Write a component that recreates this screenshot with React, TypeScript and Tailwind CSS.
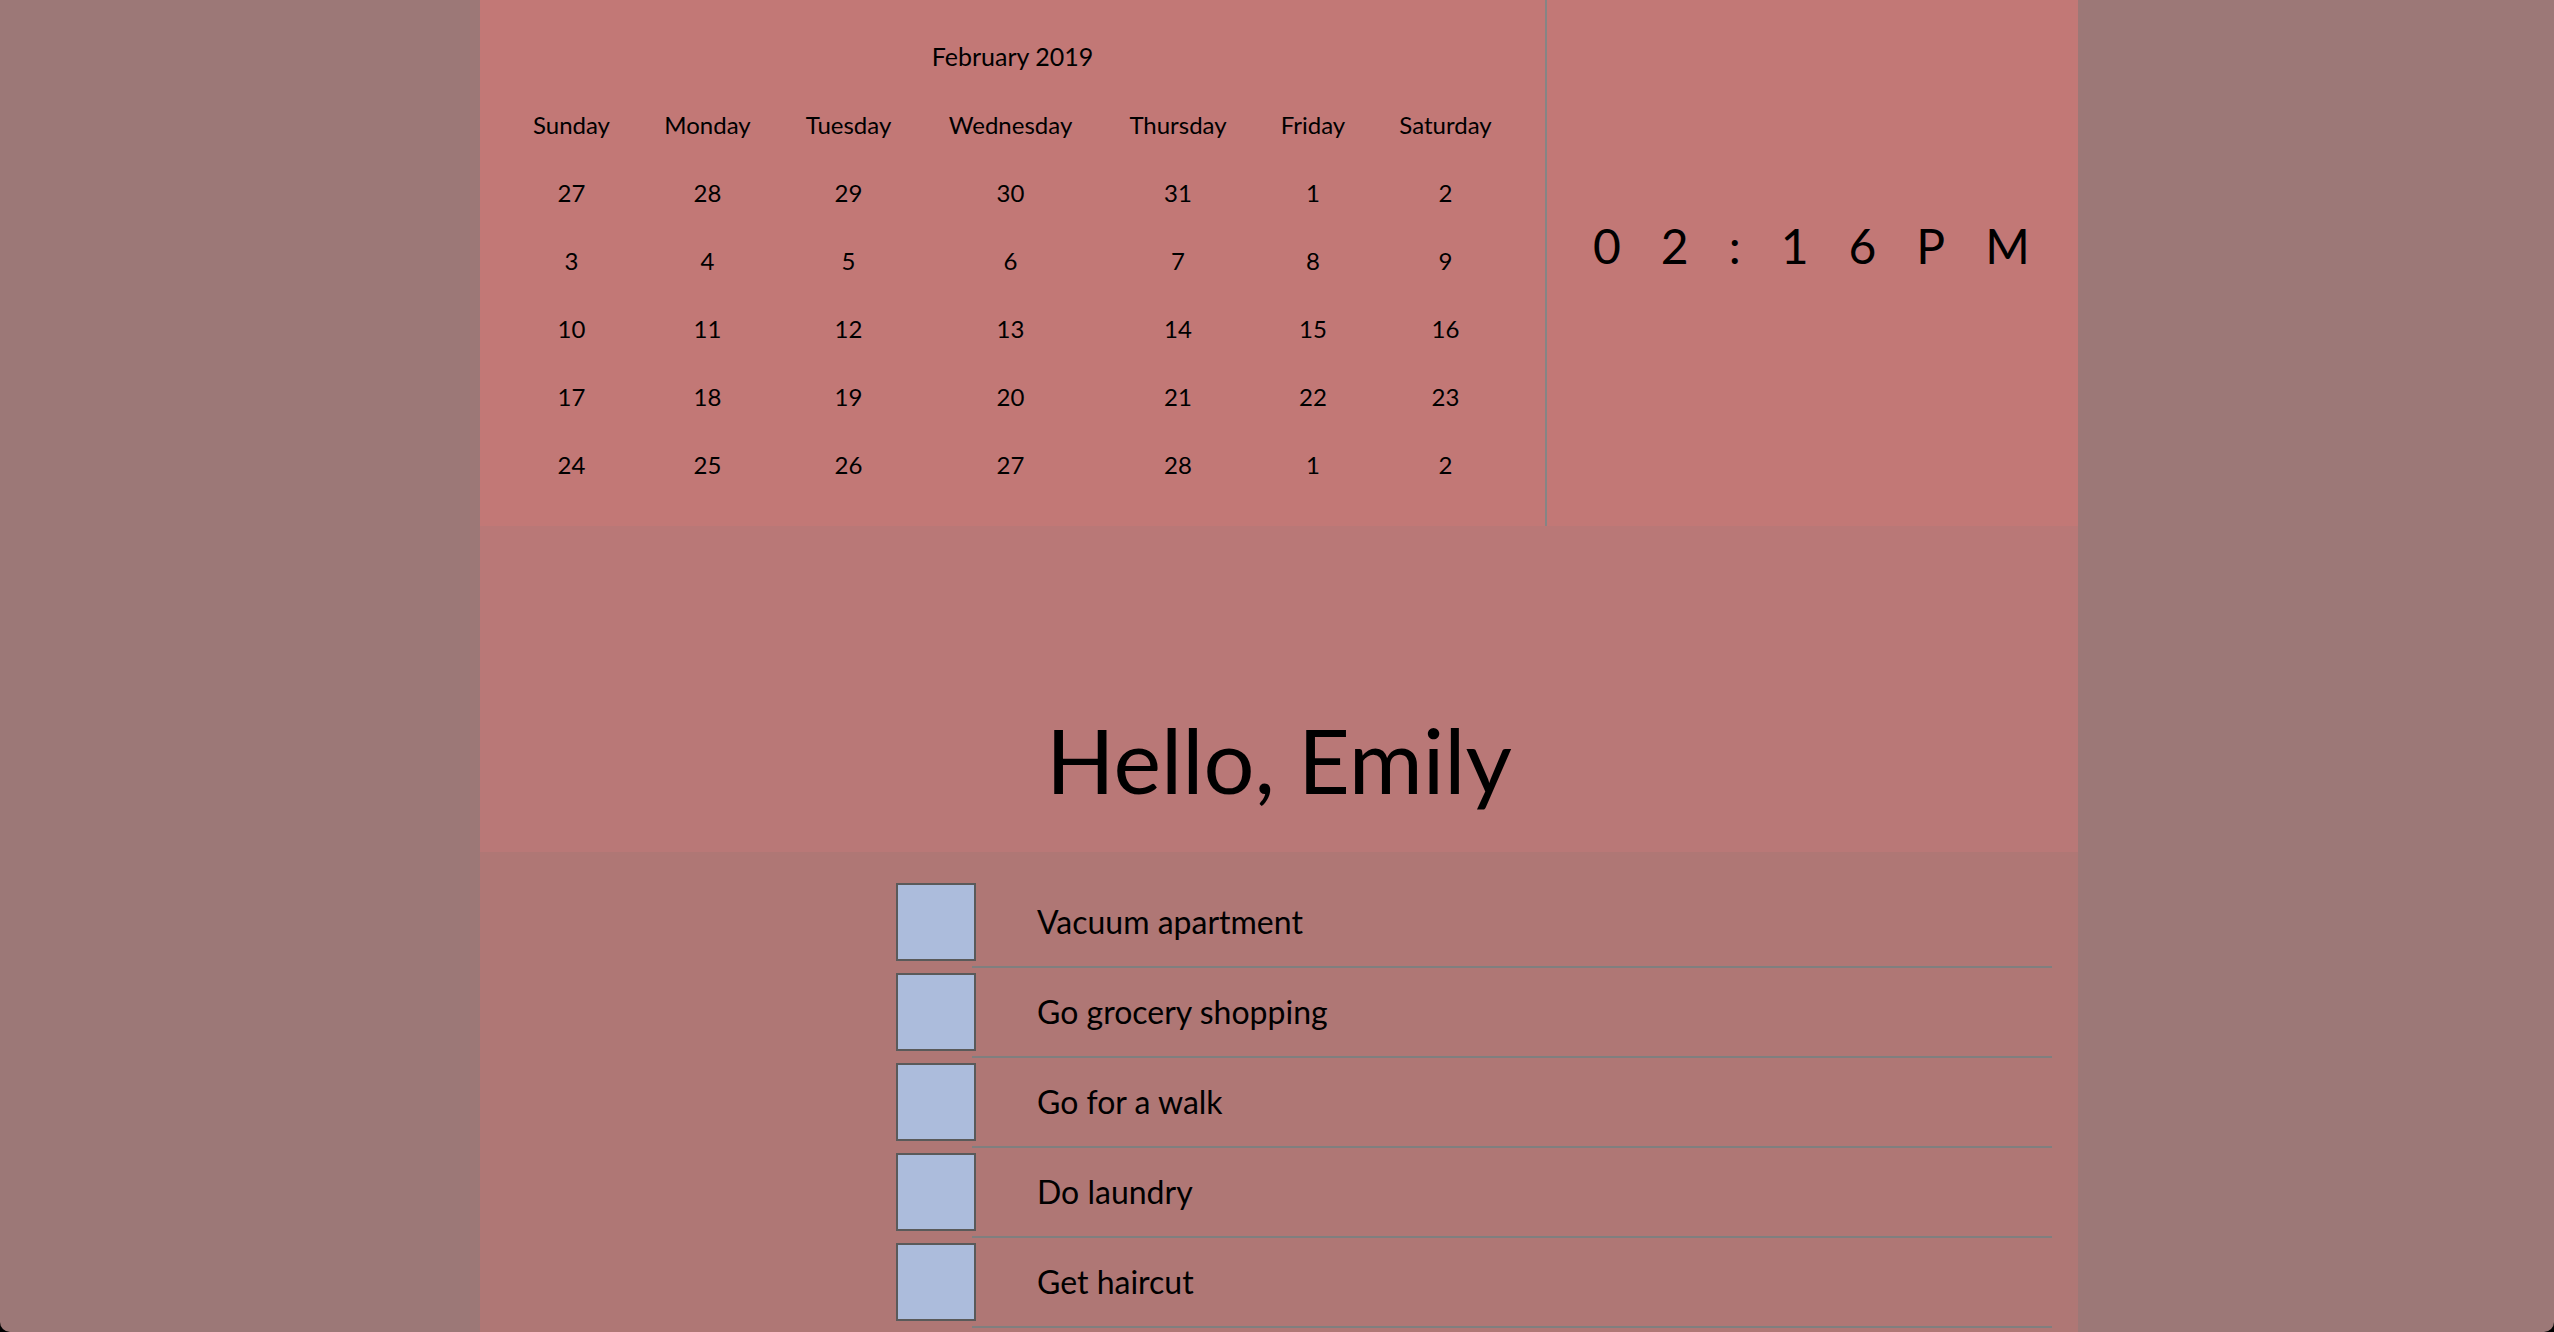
const days = ["Sunday", "Monday", "Tuesday", "Wednesday", "Thursday", "Friday", "Saturday"];

const weeks = [
  [27, 28, 29, 30, 31, 1, 2],
  [3, 4, 5, 6, 7, 8, 9],
  [10, 11, 12, 13, 14, 15, 16],
  [17, 18, 19, 20, 21, 22, 23],
  [24, 25, 26, 27, 28, 1, 2],
];

const todos = ["Vacuum apartment", "Go grocery shopping", "Go for a walk", "Do laundry", "Get haircut", ""];

const cols = "grid grid-cols-[131px_141px_141px_183px_152px_118px_147px] h-[68px] items-center text-center";

const Calendar = () =>
  <div className="w-[1067px] h-[526px] border-r-2 border-[#858585] pt-[23px] text-[24px] leading-normal">
    <div className="h-[68px] flex items-center justify-center text-[25px]">February 2019</div>
    <div className="pl-[26px]">
      <div className={cols}>
        {days.map(d => <div key={d}>{d}</div>)}
      </div>
      {weeks.map((w, i) =>
        <div key={i} className={cols}>
          {w.map((n, j) => <div key={j}>{n}</div>)}
        </div>
      )}
    </div>
  </div>

const Clock = () =>
  <div className="flex-1 h-[526px] pt-[217px] pl-[46px]">
    <div className="text-[48px] leading-[58px] tracking-[40px] whitespace-nowrap">02:16PM</div>
  </div>

const TodoRow = ({ label }: { label: string }) =>
  <div className="flex">
    <div className="w-[80px] h-[78px] mt-[5px] -mr-[4px] shrink-0 border-2 border-[#5a5a5a] bg-[#acbcdc] relative z-10"></div>
    <div className="flex-1 h-[90px] border-b-2 border-[#7f7f7f] flex items-center pl-[65px] text-[32px] leading-normal">
      {label}
    </div>
  </div>

export default function App() {
  return (
    <div className="h-screen overflow-hidden bg-black font-['Lato',sans-serif] text-black">
      <div className="h-full overflow-hidden rounded-b-[10px] bg-[#9c7877]">
        <div className="ml-[480px] w-[1598px]">
          <div className="flex bg-[#c27876]">
            <Calendar />
            <Clock />
          </div>
          <div className="h-[326px] bg-[#b97877] flex items-end justify-center pb-[39px]">
            <h1 className="text-[90px] leading-[108px]">Hello, Emily</h1>
          </div>
          <div className="bg-[#af7775] pt-[26px] pl-[416px] pr-[26px] pb-10">
            {todos.map((t, i) => <TodoRow key={i} label={t} />)}
          </div>
        </div>
      </div>
    </div>
  );
}
